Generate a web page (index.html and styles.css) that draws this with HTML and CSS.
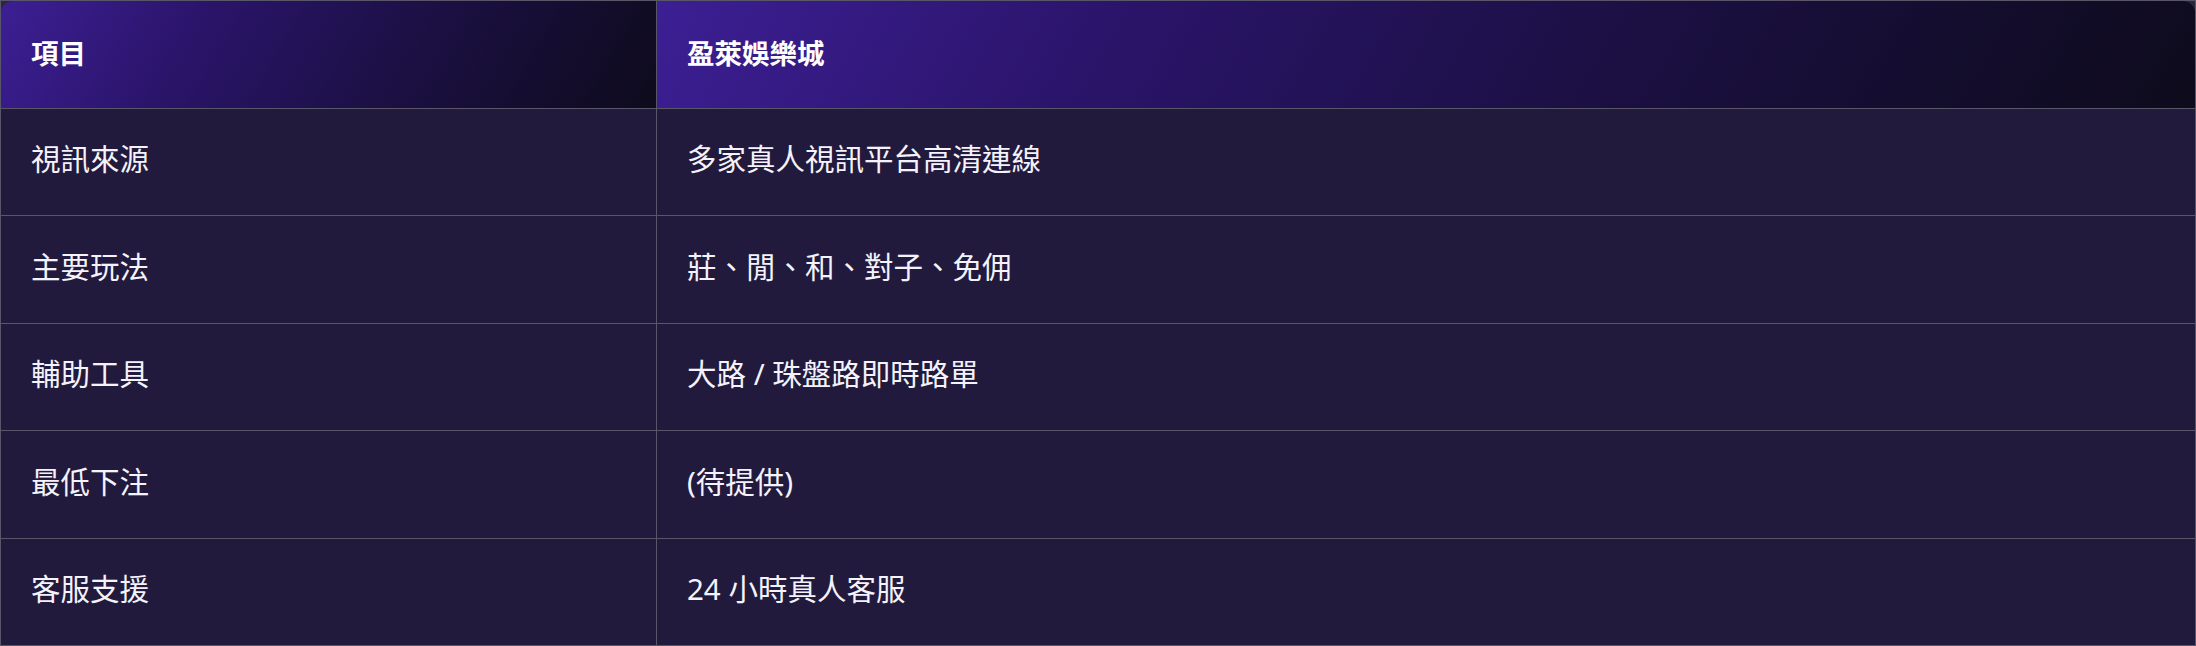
FILE: index.html
```html
<!DOCTYPE html>
<html lang="zh-Hant">
<head>
<meta charset="utf-8">
<title>盈萊娛樂城</title>
<link rel="stylesheet" href="styles.css">
</head>
<body>
<table class="compare">
  <thead>
    <tr>
      <th class="col-key">項目</th>
      <th class="col-val">盈萊娛樂城</th>
    </tr>
  </thead>
  <tbody>
    <tr><td>視訊來源</td><td>多家真人視訊平台高清連線</td></tr>
    <tr><td>主要玩法</td><td>莊、閒、和、對子、免佣</td></tr>
    <tr><td>輔助工具</td><td>大路 / 珠盤路即時路單</td></tr>
    <tr><td>最低下注</td><td>(待提供)</td></tr>
    <tr><td>客服支援</td><td>24 小時真人客服</td></tr>
  </tbody>
</table>
</body>
</html>
```
FILE: styles.css
```css
html, body {
  margin: 0;
  padding: 0;
  background: #2a2738;
}

body {
  font-family: "Noto Sans", "Noto Sans CJK TC", sans-serif;
  color: #f4f2fb;
}

.compare {
  width: 2196px;
  border-collapse: separate;
  border-spacing: 0;
  border: 1px solid #5a5669;
  background: #2a2738;
  table-layout: fixed;
}

.compare th,
.compare td {
  height: 107.5px;
  box-sizing: border-box;
  text-align: left;
  vertical-align: middle;
  padding: 0 30px 5px;
  border-bottom: 1px solid #5a5669;
  line-height: 1.3;
}

.compare tbody tr:last-child td {
  height: 106.5px;
  border-bottom: none;
}

.compare th:first-child,
.compare td:first-child {
  width: 656px;
  border-right: 1px solid #5a5669;
}

.compare th {
  font-family: "Noto Sans CJK TC", sans-serif;
  font-size: 27.5px;
  font-weight: 700;
  color: #ffffff;
  padding-bottom: 2px;
  background: linear-gradient(120deg, #3c1f94 0%, #2a1469 30%, #1c1045 60%, #0e0b1c 100%);
}

.compare th.col-key {
  border-top-left-radius: 12px;
}

.compare th.col-val {
  border-top-right-radius: 12px;
}

.compare td {
  font-size: 29.5px;
  font-weight: 400;
  background: #211a3d;
}
```
